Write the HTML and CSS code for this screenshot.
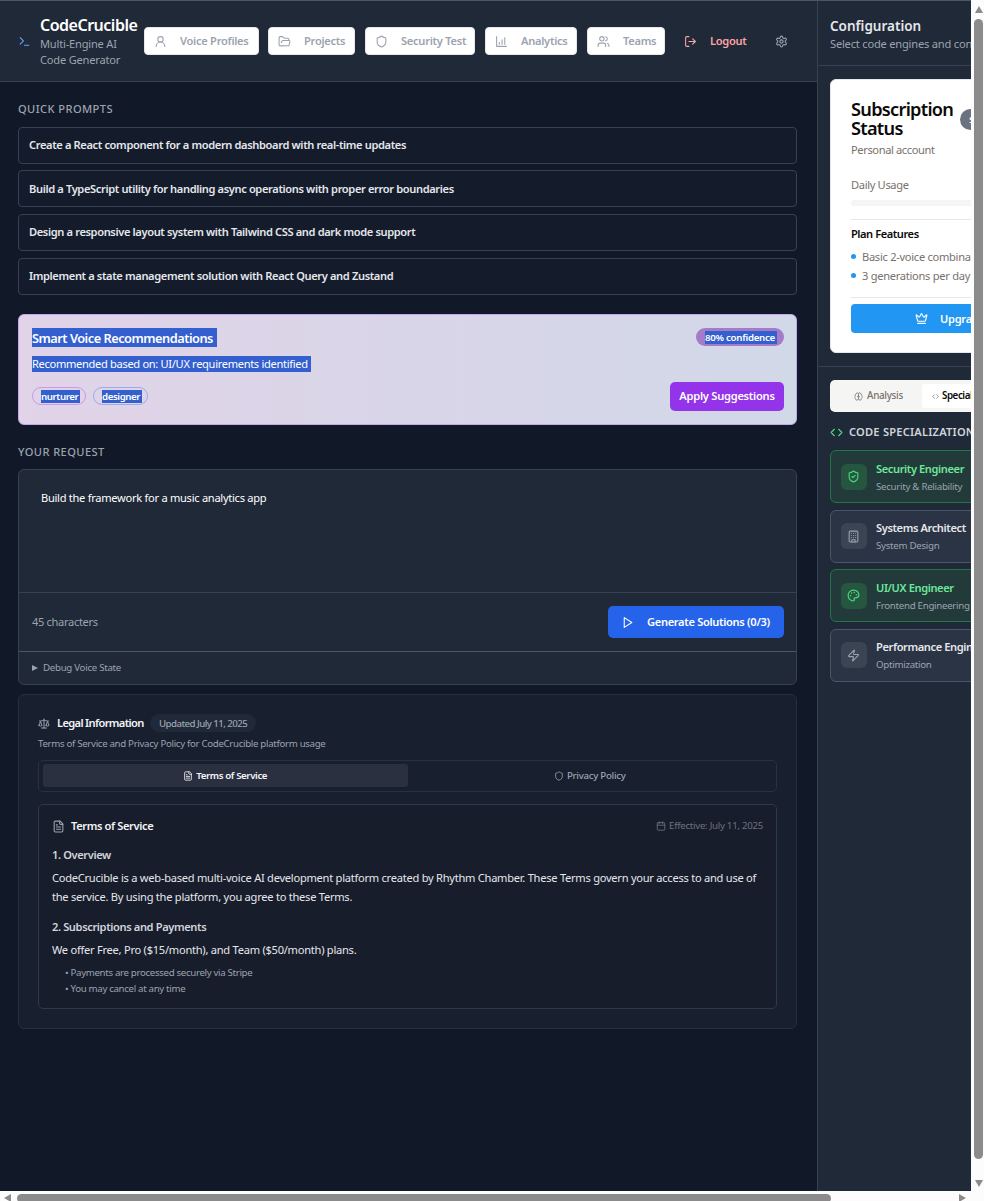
FILE: index.html
```html
<!DOCTYPE html>
<html lang="en">
<head>
<meta charset="utf-8">
<title>CodeCrucible</title>
<link rel="stylesheet" href="styles.css">
</head>
<body>
<svg class="defs" width="0" height="0">
  <symbol id="shield" viewBox="0 0 24 24"><path d="M20 13c0 5-3.5 7.500-7.660 8.950a1 1 0 0 1-.67-.01C7.500 20.500 4 18 4 13V6a1 1 0 0 1 1-1c2 0 4.500-1.200 6.240-2.720a1.170 1.170 0 0 1 1.520 0C14.510 3.810 17 5 19 5a1 1 0 0 1 1 1z"/></symbol>
  <symbol id="file" viewBox="0 0 24 24"><path d="M15 2H6a2 2 0 0 0-2 2v16a2 2 0 0 0 2 2h12a2 2 0 0 0 2-2V7Z"/><path d="M14 2v4a2 2 0 0 0 2 2h4M10 9H8M16 13H8M16 17H8"/></symbol>
  <symbol id="code" viewBox="0 0 24 24"><path d="m16 18 6-6-6-6M8 6l-6 6 6 6"/></symbol>
</svg>
<div class="window">
  <div class="viewport">
    <main class="main">
      <header class="topbar">
        <svg class="ic brand-ic" viewBox="0 0 24 24"><path d="m4 17 6-6-6-6M12 19h8"/></svg>
        <div class="brand">
          <h1 class="brand-name"><span>CodeCrucible</span></h1>
          <p class="brand-sub"><span>Multi-Engine AI</span><br><span>Code Generator</span></p>
        </div>
        <nav class="nav">
          <button class="nav-btn voice"><svg class="ic" viewBox="0 0 24 24"><circle cx="12" cy="8" r="5"/><path d="M20 21a8 8 0 0 0-16 0"/></svg><span>Voice Profiles</span></button>
          <button class="nav-btn projects"><svg class="ic" viewBox="0 0 24 24"><path d="m6 14 1.500-2.900A2 2 0 0 1 9.240 10H20a2 2 0 0 1 1.940 2.500l-1.540 6a2 2 0 0 1-1.950 1.500H4a2 2 0 0 1-2-2V5a2 2 0 0 1 2-2h3.900a2 2 0 0 1 1.690.9l.81 1.200a2 2 0 0 0 1.670.9H18a2 2 0 0 1 2 2v2"/></svg><span>Projects</span></button>
          <button class="nav-btn security"><svg class="ic"><use href="#shield"/></svg><span>Security Test</span></button>
          <button class="nav-btn analytics"><svg class="ic" viewBox="0 0 24 24"><path d="M3 3v18h18M8 17v-3M13 17V9M18 17V5"/></svg><span>Analytics</span></button>
          <button class="nav-btn teams"><svg class="ic" viewBox="0 0 24 24"><path d="M16 21v-2a4 4 0 0 0-4-4H6a4 4 0 0 0-4 4v2"/><circle cx="9" cy="7" r="4"/><path d="M22 21v-2a4 4 0 0 0-3-3.870M16 3.130a4 4 0 0 1 0 7.750"/></svg><span>Teams</span></button>
        </nav>
        <button class="logout"><svg class="ic" viewBox="0 0 24 24"><path d="M9 21H5a2 2 0 0 1-2-2V5a2 2 0 0 1 2-2h4M16 17l5-5-5-5M21 12H9"/></svg><span>Logout</span></button>
        <svg class="ic gear" viewBox="0 0 24 24"><path d="M12.220 2h-.44a2 2 0 0 0-2 2v.18a2 2 0 0 1-1 1.730l-.43.25a2 2 0 0 1-2 0l-.15-.08a2 2 0 0 0-2.730.73l-.22.38a2 2 0 0 0 .73 2.730l.15.1a2 2 0 0 1 1 1.720v.51a2 2 0 0 1-1 1.740l-.15.09a2 2 0 0 0-.73 2.730l.22.38a2 2 0 0 0 2.730.73l.15-.08a2 2 0 0 1 2 0l.43.25a2 2 0 0 1 1 1.730V20a2 2 0 0 0 2 2h.44a2 2 0 0 0 2-2v-.18a2 2 0 0 1 1-1.730l.43-.25a2 2 0 0 1 2 0l.15.08a2 2 0 0 0 2.730-.73l.22-.39a2 2 0 0 0-.73-2.730l-.15-.08a2 2 0 0 1-1-1.740v-.5a2 2 0 0 1 1-1.740l.15-.09a2 2 0 0 0 .73-2.730l-.22-.38a2 2 0 0 0-2.730-.73l-.15.08a2 2 0 0 1-2 0l-.43-.25a2 2 0 0 1-1-1.730V4a2 2 0 0 0-2-2z"/><circle cx="12" cy="12" r="3"/></svg>
      </header>

      <div class="content">
        <h2 class="label label-prompts"><span>QUICK PROMPTS</span></h2>
        <div class="prompts">
          <button class="prompt"><span>Create a React component for a modern dashboard with real-time updates</span></button>
          <button class="prompt"><span>Build a TypeScript utility for handling async operations with proper error boundaries</span></button>
          <button class="prompt"><span>Design a responsive layout system with Tailwind CSS and dark mode support</span></button>
          <button class="prompt"><span>Implement a state management solution with React Query and Zustand</span></button>
        </div>

        <section class="smart">
          <div class="smart-left">
            <h3 class="smart-title"><span class="sel">Smart Voice Recommendations</span></h3>
            <p class="smart-text"><span class="sel">Recommended based on: UI/UX requirements identified</span></p>
            <div class="chips">
              <span class="chip nurturer"><span class="sel">nurturer</span></span>
              <span class="chip designer"><span class="sel">designer</span></span>
            </div>
          </div>
          <div class="smart-right">
            <span class="confidence"><span class="sel">80% confidence</span></span>
            <button class="apply"><span>Apply Suggestions</span></button>
          </div>
        </section>

        <h2 class="label label-request"><span>YOUR REQUEST</span></h2>
        <section class="request">
          <div class="request-input"><span>Build the framework for a music analytics app</span></div>
          <div class="request-bar">
            <span class="count">45 characters</span>
            <button class="generate"><svg class="ic" viewBox="0 0 24 24"><path d="m6 3 14 9-14 9z"/></svg><span>Generate Solutions (0/3)</span></button>
          </div>
          <div class="debug"><i class="tri"></i><span>Debug Voice State</span></div>
        </section>

        <section class="legal">
          <div class="legal-head">
            <svg class="ic" viewBox="0 0 24 24"><path d="m16 16 3-8 3 8c-.87.65-1.920 1-3 1s-2.130-.35-3-1ZM2 16l3-8 3 8c-.87.65-1.920 1-3 1s-2.130-.35-3-1ZM7 21h10M12 3v18M3 7h2c2 0 5-1 7-2 2 1 5 2 7 2h2"/></svg>
            <h3 class="legal-title">Legal Information</h3>
            <span class="updated"><span>Updated July 11, 2025</span></span>
          </div>
          <p class="legal-sub"><span>Terms of Service and Privacy Policy for CodeCrucible platform usage</span></p>
          <div class="legal-tabs">
            <div class="legal-tab active"><svg class="ic"><use href="#file"/></svg><span>Terms of Service</span></div>
            <div class="legal-tab"><svg class="ic"><use href="#shield"/></svg><span>Privacy Policy</span></div>
          </div>
          <article class="terms">
            <div class="terms-head">
              <svg class="ic"><use href="#file"/></svg>
              <h4 class="terms-title">Terms of Service</h4>
              <div class="effective"><svg class="ic" viewBox="0 0 24 24"><path d="M8 2v4M16 2v4M3 10h18"/><rect x="3" y="4" width="18" height="18" rx="2"/></svg><span>Effective: July 11, 2025</span></div>
            </div>
            <h5 class="clause overview"><span>1. Overview</span></h5>
            <p class="body"><span>CodeCrucible is a web-based multi-voice AI development platform created by Rhythm Chamber. These Terms govern your access to and use of</span><br><span>the service. By using the platform, you agree to these Terms.</span></p>
            <h5 class="clause payments"><span>2. Subscriptions and Payments</span></h5>
            <p class="body plans"><span>We offer Free, Pro ($15/month), and Team ($50/month) plans.</span></p>
            <ul class="points"><li><span>• Payments are processed securely via Stripe</span></li><li><span>• You may cancel at any time</span></li></ul>
          </article>
        </section>
      </div>
    </main>

    <aside class="side">
      <div class="side-head">
        <h2 class="side-title"><span>Configuration</span></h2>
        <p class="side-sub"><span>Select code engines and configure</span></p>
      </div>
      <div class="side-plan">
        <section class="plan">
          <div class="plan-head">
            <h3 class="plan-title"><span>Subscription</span><br><span>Status</span></h3>
            <span class="tier">Starter</span>
          </div>
          <p class="plan-sub"><span>Personal account</span></p>
          <p class="usage"><span>Daily Usage</span></p>
          <div class="meter"></div>
          <div class="features">
            <h4 class="features-title"><span>Plan Features</span></h4>
            <ul class="feature-list"><li><i class="dot"></i><span>Basic 2-voice combinations</span></li><li><i class="dot"></i><span>3 generations per day</span></li></ul>
          </div>
          <div class="upgrade-wrap">
            <button class="upgrade"><svg class="ic" viewBox="0 0 24 24"><path d="M11.560 3.270a.5.5 0 0 1 .88 0L15.390 8.870a1 1 0 0 0 1.520.3L21.180 5.500a.5.5 0 0 1 .8.520l-2.830 10.250a1 1 0 0 1-.96.730H5.810a1 1 0 0 1-.96-.73L2.020 6.020a.5.5 0 0 1 .8-.52l4.280 3.660a1 1 0 0 0 1.520-.29zM5 21h14"/></svg><span>Upgrade</span></button>
          </div>
        </section>
      </div>
      <div class="side-body">
        <div class="side-tabs">
          <div class="side-tab"><svg class="ic" viewBox="0 0 24 24"><path d="M12 5a3 3 0 1 0-6 .13 4 4 0 0 0-2.500 5.770A4 4 0 0 0 4 17.500 4 4 0 1 0 12 18ZM12 5a3 3 0 1 1 6 .13 4 4 0 0 1 2.500 5.770 4 4 0 0 1-.5 6.600A4 4 0 1 1 12 18M15 13a4.500 4.500 0 0 1-3-4 4.500 4.500 0 0 1-3 4"/></svg><span>Analysis</span></div>
          <div class="side-tab active"><svg class="ic"><use href="#code"/></svg><span>Specialists</span></div>
        </div>
        <h3 class="spec-title"><svg class="ic"><use href="#code"/></svg><span>CODE SPECIALIZATIONS</span></h3>
        <div class="engines">
          <div class="engine on"><div class="tile"><svg class="ic" viewBox="0 0 24 24"><use href="#shield"/><path d="m9 12 2 2 4-4"/></svg></div><div><h4 class="en-name"><span>Security Engineer</span></h4><p class="en-sub"><span>Security &amp; Reliability</span></p></div></div>
          <div class="engine"><div class="tile"><svg class="ic" viewBox="0 0 24 24"><rect x="4" y="2" width="16" height="20" rx="2"/><path d="M9 22v-4h6v4M8 6h.01M16 6h.01M12 6h.01M12 10h.01M12 14h.01M16 10h.01M16 14h.01M8 10h.01M8 14h.01"/></svg></div><div><h4 class="en-name"><span>Systems Architect</span></h4><p class="en-sub"><span>System Design</span></p></div></div>
          <div class="engine on"><div class="tile"><svg class="ic" viewBox="0 0 24 24"><circle cx="13.500" cy="6.500" r=".5"/><circle cx="17.500" cy="10.500" r=".5"/><circle cx="8.500" cy="7.500" r=".5"/><circle cx="6.500" cy="12.500" r=".5"/><path d="M12 2C6.500 2 2 6.500 2 12s4.500 10 10 10c.93 0 1.650-.75 1.650-1.690 0-.44-.18-.84-.44-1.130-.29-.29-.44-.65-.44-1.120a1.640 1.640 0 0 1 1.670-1.670h2c3.050 0 5.560-2.500 5.560-5.560C21.970 6.010 17.460 2 12 2z"/></svg></div><div><h4 class="en-name"><span>UI/UX Engineer</span></h4><p class="en-sub"><span>Frontend Engineering</span></p></div></div>
          <div class="engine"><div class="tile"><svg class="ic" viewBox="0 0 24 24"><path d="M4 14a1 1 0 0 1-.78-1.630l9.900-10.200a.5.5 0 0 1 .86.460l-1.920 6.020A1 1 0 0 0 13 10h7a1 1 0 0 1 .78 1.630l-9.900 10.200a.5.5 0 0 1-.86-.46l1.920-6.020A1 1 0 0 0 11 14z"/></svg></div><div><h4 class="en-name"><span>Performance Engineer</span></h4><p class="en-sub"><span>Optimization</span></p></div></div>
        </div>
      </div>
    </aside>
  </div>
  <div class="vbar"><i class="arrow up"></i><i class="vthumb"></i><i class="arrow down"></i></div>
  <div class="hbar"><i class="arrow left"></i><i class="hthumb"></i><i class="arrow right"></i></div>
</div>
</body>
</html>
```
FILE: styles.css
```css
* { box-sizing: border-box; margin: 0; padding: 0; }
body { width: 984px; height: 1201px; overflow: hidden; background: #fcfcfc; font-family: "Noto Sans", "Open Sans", sans-serif; font-size: 11.1px; font-weight: 400; color: #e5e7eb; line-height: 16px; letter-spacing: -0.28px; }
button { font: inherit; letter-spacing: inherit; color: inherit; border: 0; background: none; display: flex; align-items: center; }
ul { list-style: none; }
h1, h2, h3, h4, h5 { font-size: inherit; font-weight: 500; }
span { white-space: nowrap; }
.defs { display: none; }
.ic { width: 13px; height: 13px; flex: none; fill: none; stroke: currentColor; stroke-width: 2; stroke-linecap: round; stroke-linejoin: round; }

.window { display: grid; grid-template-columns: 971px 13px; grid-template-rows: 1191px 10px; width: 984px; height: 1201px; }
.viewport { display: flex; overflow: hidden; border-top: 1px solid #4b5563; background: #111827; }
.main { width: 817px; flex: none; }

.topbar { height: 81px; display: flex; align-items: center; padding-left: 18px; background: #1f2937; border-bottom: 1px solid #374151; }
.brand-ic { color: #60a5fa; margin-right: 9px; }
.brand { width: 104px; }
.brand-name { font-size: 16px; line-height: 19px; font-weight: 600; color: #fff; letter-spacing: -0.5px; padding-top: 2px; }
.brand-sub { color: #9ca3af; line-height: 16px; padding-top: 1px; letter-spacing: -0.2px; }
.nav { display: flex; gap: 10px; }
.nav-btn { height: 28px; border: 1px solid #e5e7eb; border-radius: 4px; background: #fff; color: #9ca3af; padding-left: 9px; gap: 13px; font-weight: 600; letter-spacing: -0.27px; }
.voice { width: 115px; }
.projects { width: 87px; margin-left: -1px; }
.security { width: 110px; }
.analytics { width: 92px; }
.teams { width: 78px; }
.logout { color: #fca5a5; gap: 13px; margin-left: 19px; width: 72px; font-weight: 600; }
.gear { color: #9ca3af; margin-left: 19px; }

.content { padding: 0 20px 0 18px; }
.label { color: #9ca3af; letter-spacing: .42px; line-height: 16px; }
.label-prompts { padding-top: 19px; margin-bottom: 9.700px; }
.prompts { display: flex; flex-direction: column; gap: 6.700px; }
.prompt { height: 37px; border: 1px solid #374151; border-radius: 4px; background: #141c2b; padding: 0 0 .4px 10px; font-weight: 600; letter-spacing: -0.37px; }
.smart { margin-top: 19.300px; height: 111px; border: 1px solid #c4a5ee; border-radius: 6px; padding: 13px 12px 13px 13px; display: flex; justify-content: space-between; background: linear-gradient(90deg, #e1d3e8, #d1d8e8); }
.sel { background: #345fcf; color: #fff; }
.smart-title { font-size: 12.800px; font-weight: 600; line-height: 20px; letter-spacing: -0.5px; }
.smart-title .sel { display: inline-block; height: 19px; padding-right: 4px; }
.smart-text { margin-top: 8px; line-height: 16px; letter-spacing: -0.32px; }
.smart-text .sel { display: inline-block; height: 16px; padding-right: 3px; }
.chips { display: flex; gap: 7px; margin-top: 15px; }
.chip { height: 18px; border-radius: 9px; border: 1px solid #c79bea; padding: 2px 0 0 8px; font-size: 9.700px; line-height: 13px; font-weight: 600; letter-spacing: -0.4px; }
.chip .sel { display: inline-block; height: 13px; padding-right: 2px; }
.nurturer { width: 54px; }
.designer { width: 55px; border-color: #98ace9; }
.smart-right { display: flex; flex-direction: column; align-items: flex-end; justify-content: space-between; }
.confidence { width: 88px; height: 18px; border-radius: 9px; background: #a37bc9; padding: 3px 0 0 9px; font-size: 9.700px; line-height: 13px; font-weight: 600; letter-spacing: -0.28px; }
.confidence .sel { display: inline-block; height: 13px; padding-right: 2px; }
.apply { width: 114px; height: 29px; border-radius: 5px; background: #9333ea; color: #fff; justify-content: center; font-weight: 600; letter-spacing: -0.25px; padding-bottom: 1px; }
.label-request { margin-top: 19px; }
.request { margin-top: 9px; height: 216px; border: 1px solid #374151; border-radius: 6px; background: #1f2937; }
.request-input { height: 122px; padding: 20px 0 0 22px; color: #fff; }
.request-bar { height: 59px; border-top: 1px solid #374151; display: flex; align-items: center; justify-content: space-between; padding: 0 12px 0 13px; }
.count { color: #9ca3af; letter-spacing: -0.33px; }
.generate { width: 176px; height: 32px; border-radius: 5px; background: #2563eb; color: #fff; gap: 13px; padding-left: 13px; font-weight: 600; letter-spacing: -0.32px; }
.debug { height: 33px; border-top: 1px solid #4b5563; display: flex; align-items: center; gap: 5px; padding-left: 13px; font-size: 9.700px; color: #9ca3af; }
.tri { border-left: 6px solid #9ca3af; border-top: 3px solid transparent; border-bottom: 3px solid transparent; }

.legal { margin-top: 9px; height: 335px; border: 1px solid #252f3e; border-radius: 6px; background: #181f2e; padding: 19px; }
.legal-head { display: flex; align-items: center; height: 18px; color: #9ca3af; }
.legal-head .ic { width: 12px; }
.legal-title { color: #f3f4f6; font-weight: 600; margin-left: 7px; width: 93px; white-space: nowrap; letter-spacing: -0.65px; }
.updated { height: 18px; width: 106px; border-radius: 9px; background: #1f2937; padding-left: 9px; line-height: 19px; font-size: 9.700px; font-weight: 500; letter-spacing: -0.56px; }
.legal-sub { font-size: 9.700px; line-height: 16px; color: #9ca3af; margin-top: 4px; letter-spacing: -0.32px; }
.legal-tabs { margin-top: 8px; height: 32px; border: 1px solid #273241; border-radius: 5px; padding: 3px 4px; display: grid; grid-template-columns: 1fr 1fr; }
.legal-tab { display: flex; align-items: center; justify-content: center; gap: 3px; border-radius: 3px; font-size: 9.700px; font-weight: 500; color: #9ca3af; }
.legal-tab .ic { width: 10px; height: 10px; }
.legal-tab.active { background: #2a3040; color: #f3f4f6; height: 23px; font-weight: 600; letter-spacing: -0.4px; }
.terms { margin-top: 12px; height: 205px; border: 1px solid #303948; border-radius: 5px; background: #181d2c; padding: 12px 13px; }
.terms-head { display: flex; align-items: center; height: 18px; color: #9ca3af; }
.terms-title { color: #f3f4f6; margin-left: 6px; flex: 1; font-weight: 600; letter-spacing: -0.38px; }
.effective { display: flex; align-items: center; gap: 3px; font-size: 9.700px; color: #6b7280; }
.effective .ic { width: 10px; height: 10px; }
.clause { color: #d1d5db; line-height: 16px; font-weight: 600; letter-spacing: -0.38px; }
.overview { margin-top: 12px; }
.body { line-height: 19px; margin-top: 5px; letter-spacing: -0.255px; }
.payments { margin-top: 13px; }
.points { font-size: 9.700px; color: #9ca3af; padding-left: 13px; margin-top: 6px; letter-spacing: -0.33px; }

.side { width: 267px; flex: none; background: #1f2937; border-left: 1px solid #374151; }
.side-head { height: 65px; padding: 16px 12px 0; border-bottom: 1px solid #374151; }
.side-title { font-size: 13.500px; font-weight: 600; line-height: 19px; letter-spacing: 0; }
.side-sub { color: #9ca3af; line-height: 16px; letter-spacing: -0.2px; }
.side-plan { height: 301px; padding: 13px 12px 0; border-bottom: 1px solid #374151; }
.plan { height: 274px; border: 1px solid #e5e7eb; border-radius: 6px; background: #fff; padding: 20px 20px; color: #78716c; }
.plan-head { display: flex; align-items: center; height: 38px; }
.plan-title { width: 109px; flex: none; color: #0c0a09; font-size: 18.200px; line-height: 19px; letter-spacing: -0.72px; font-weight: 600; }
.tier { height: 21px; border-radius: 11px; background: #6b7280; color: #fff; padding: 3px 9px; line-height: 15px; font-size: 9.700px; font-weight: 600; }
.plan-sub { margin-top: 4px; letter-spacing: -0.38px; }
.usage { margin-top: 19px; letter-spacing: -0.33px; }
.meter { height: 6px; border-radius: 3px; background: #f5f5f4; margin-top: 7px; }
.features { margin-top: 13px; border-top: 1px solid #e5e7eb; padding-top: 6px; }
.features-title { color: #0c0a09; font-weight: 600; letter-spacing: -0.45px; }
.feature-list { margin-top: 5px; }
.feature-list li { display: flex; align-items: center; gap: 6px; height: 19px; }
.dot { width: 5px; height: 5px; border-radius: 50%; background: #2196f3; }
.upgrade-wrap { margin-top: 12px; border-top: 1px solid #e5e7eb; padding-top: 6px; }
.upgrade { height: 29px; width: 100%; border-radius: 4px; background: #2196f3; color: #fff; padding-left: 64px; gap: 12px; font-weight: 600; }
.side-body { padding: 13px 12px; }
.side-tabs { height: 32px; border-radius: 5px; background: #f5f5f4; color: #78716c; padding: 4px; display: grid; grid-template-columns: 88px 1fr; font-size: 9.800px; font-weight: 500; }
.side-tab { display: flex; align-items: center; gap: 4px; border-radius: 3px; padding-left: 20px; }
.side-tab .ic { width: 9px; height: 9px; }
.side-tab.active { background: #fff; color: #0c0a09; padding-left: 10px; letter-spacing: -0.45px; font-weight: 600; }
.side-tab.active .ic { width: 7px; color: #57534e; margin-right: -1px; }
.spec-title { display: flex; align-items: center; gap: 6px; height: 16px; margin-top: 12px; color: #d1d5db; letter-spacing: .22px; font-weight: 600; }
.spec-title .ic { color: #4ade80; }
.engines { margin-top: 10px; display: flex; flex-direction: column; gap: 6.600px; }
.engine { height: 53px; border: 1px solid #4b5563; border-radius: 6px; background: #2b3445; display: flex; align-items: center; gap: 9px; padding-left: 10px; }
.engine.on { background: #223a3a; border-color: #237543; }
.tile { width: 26px; height: 26px; border-radius: 6px; background: #3b4453; color: #9ca3af; display: flex; align-items: center; justify-content: center; }
.tile .ic { margin-right: 1px; }
.on .tile { background: #265640; color: #4ade80; }
.en-name { line-height: 17px; padding-top: 1px; font-weight: 600; letter-spacing: -0.4px; }
.on .en-name { color: #6ee79b; }
.en-sub { font-size: 9.700px; line-height: 16px; padding-top: 2px; color: #9ca3af; }

.vbar { display: flex; flex-direction: column; align-items: center; }
.hbar { grid-column: 1 / 3; display: flex; align-items: flex-start; }
.arrow { border: 4.500px solid transparent; flex: none; }
.up { border-bottom: 7px solid #8b8b8b; border-top: 0; margin: 6px 0 6px 2px; }
.vthumb { width: 9px; height: 1140px; margin-left: 2px; border-radius: 5px; background: #8b8b8b; flex: none; }
.down { border-top: 7px solid #8b8b8b; border-bottom: 0; margin: 21px 0 0 2px; }
.left { border-right: 7px solid #8b8b8b; border-left: 0; margin: 3px 6px 0 4px; }
.hthumb { width: 814px; height: 9px; margin-top: 3px; border-radius: 5px; background: #8b8b8b; }
.right { border-left: 7px solid #8b8b8b; border-right: 0; margin: 3px 0 0 128px; }
```
